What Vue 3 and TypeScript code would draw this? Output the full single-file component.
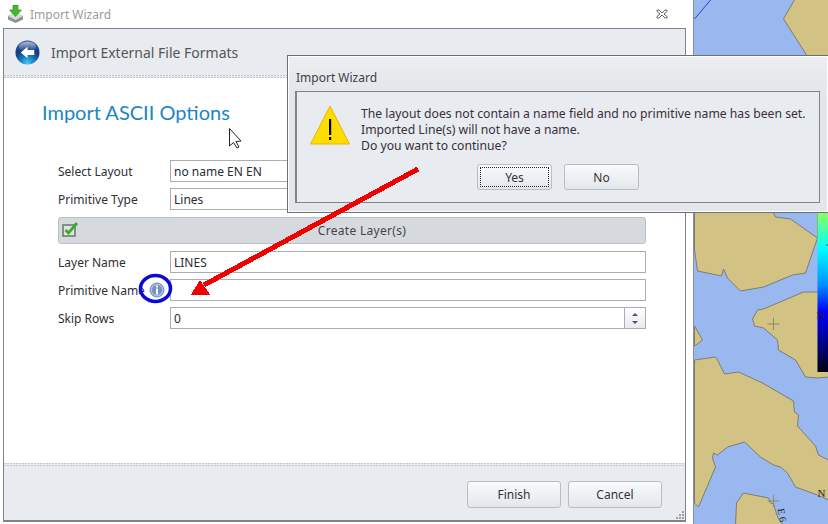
<script setup lang="ts">
const fields = [
  { label: 'Select Layout', value: 'no name EN EN' },
  { label: 'Primitive Type', value: 'Lines' },
]
const fields2 = [
  { label: 'Layer Name', value: 'LINES', info: false },
  { label: 'Primitive Name', value: '', info: true },
]
const land = [
  '795,-2 783,19 806,55 828,80 828,150 817,150 817,238 805,273 792,275 763,287 740,291 727,278 723,269 721,276 697,271 694,250 694,150 775,150 773,213 775,217 790,219 817,238 828,240 828,-2',
  '694,326 702,340 694,346',
  '828,292 803,292 763,309 757,310 752,319 754,326 763,328 777,340 778,350 795,360 805,377 817,378 828,377',
  '694,360 715,357 717,360 724,374 738,372 762,383 793,401 794,412 798,415 797,426 815,446 818,455 828,460 828,500 817,495 795,487 787,473 780,467 773,465 760,457 744,442 727,447 717,455 713,453 712,458 715,467 698,507 694,503',
  '735,526 736,503 743,493 768,498 770,503 773,504 777,517 783,526',
]
</script>

<template>
  <div class="screen">
    <section class="wizard">
      <header class="titlebar">
        <svg class="app-icon" width="15" height="18" viewBox="0 0 15 18">
          <path d="M0 11 L7.500 7 L15 11 L15 14.500 L7.500 18 L0 14.500Z" fill="#8d9296" />
          <path d="M0 11 L7.500 15 L15 11 L7.500 7Z" fill="#d8dbdd" />
          <path d="M5 0H10V5H13.500L7.500 11.500L1.500 5H5Z" fill="#43b82c" stroke="#2d8c1c" stroke-width=".6" />
        </svg>
        <span class="titlebar-text">Import Wizard</span>
        <svg class="close" width="12" height="10" viewBox="0 0 12 10">
          <path d="M1 1H3L6 4L9 1H11V2.500L8 5L11 7.500V9H9L6 6L3 9H1V7.500L4 5L1 2.500Z" fill="#fff" stroke="#555" stroke-width=".9" />
        </svg>
      </header>
      <div class="frame">
        <div class="head">
          <svg width="25" height="25" viewBox="0 0 26 26">
            <defs>
              <radialGradient id="ball" cx=".5" cy=".95" r=".85">
                <stop offset="0" stop-color="#3fd0f0" />
                <stop offset=".35" stop-color="#1a7cc4" />
                <stop offset=".7" stop-color="#123a80" />
                <stop offset="1" stop-color="#2c4f92" />
              </radialGradient>
              <linearGradient id="shine" x1="0" y1="0" x2="0" y2="1">
                <stop offset="0" stop-color="#fff" stop-opacity=".6" />
                <stop offset="1" stop-color="#fff" stop-opacity="0" />
              </linearGradient>
            </defs>
            <circle cx="13" cy="13" r="12.500" fill="url(#ball)" />
            <ellipse cx="13" cy="7" rx="9" ry="5.500" fill="url(#shine)" />
            <path d="M6 13L13 7V10.500H20V15.500H13V19Z" fill="#fff" />
          </svg>
          <span class="head-text">Import External File Formats</span>
        </div>
        <div class="rule"></div>
        <main class="content">
          <h1 class="section-title">Import ASCII Options</h1>
          <div class="form">
            <div v-for="f in fields" :key="f.label" class="row">
              <label class="label">{{ f.label }}</label>
              <div class="input">{{ f.value }}</div>
            </div>
            <div class="create">
              <svg class="check" width="17" height="16" viewBox="0 0 17 16">
                <rect x="1" y="4" width="12" height="11" fill="#dfe4e2" stroke="#69756b" stroke-width="1.500" />
                <path d="M3.500 9L6.500 12L15 2" fill="none" stroke="#3cab2b" stroke-width="2.800" />
              </svg>
              <span>Create Layer(s)</span>
            </div>
            <div v-for="f in fields2" :key="f.label" class="row">
              <label class="label">{{ f.label }}</label>
              <div class="input">{{ f.value }}</div>
              <svg v-if="f.info" class="info" width="16" height="16" viewBox="0 0 16 16">
                <circle cx="8" cy="8" r="7" fill="#a9bfe2" stroke="#7388b0" />
                <circle cx="8" cy="8" r="5" fill="#6f90c8" />
                <rect x="7" y="3.500" width="2" height="2" fill="#fff" />
                <rect x="7" y="6.500" width="2" height="6" fill="#fff" />
              </svg>
            </div>
            <div class="row">
              <label class="label">Skip Rows</label>
              <div class="input spin-input">
                <span class="spin-value">0</span>
                <span class="spinner">
                  <i class="up"></i>
                  <i class="down"></i>
                </span>
              </div>
            </div>
          </div>
        </main>
        <div class="rule"></div>
        <footer class="foot">
          <button class="btn wide">Finish</button>
          <button class="btn wide">Cancel</button>
          <svg class="grip" width="10" height="10" viewBox="0 0 10 10">
            <g fill="#9aa0a6">
              <rect x="7" y="1" width="2" height="2" />
              <rect x="4" y="4" width="2" height="2" />
              <rect x="7" y="4" width="2" height="2" />
              <rect x="1" y="7" width="2" height="2" />
              <rect x="4" y="7" width="2" height="2" />
              <rect x="7" y="7" width="2" height="2" />
            </g>
          </svg>
        </footer>
      </div>
    </section>

    <div class="map">
      <svg width="135" height="524" viewBox="693.5 0 135 524">
        <defs>
          <linearGradient id="bar" x1="0" y1="0" x2="0" y2="1">
            <stop offset="0" stop-color="#8cff60" />
            <stop offset=".22" stop-color="#00ffff" />
            <stop offset=".45" stop-color="#0090ff" />
            <stop offset=".62" stop-color="#0000ff" />
            <stop offset=".8" stop-color="#000090" />
            <stop offset="1" stop-color="#000010" />
          </linearGradient>
        </defs>
        <rect x="693" y="0" width="136" height="524" fill="#99b8f0" />
        <path d="M694 19L710 0" stroke="#2a3fe0" stroke-width="1" />
        <polygon v-for="(p, i) in land" :key="i" :points="p" fill="#d2c283" stroke="#7d7d70" stroke-width="1" />
        <path d="M767 324H779M773 318V330M767 501H779M773 495V507" stroke="#8c8a60" stroke-width="1" />
        <rect x="817" y="213" width="11" height="159" fill="url(#bar)" />
        <path d="M826 245H828M826 305H828" stroke="#333" />
        <text x="816" y="319" class="chart">N</text>
        <text x="817" y="497" class="chart">N</text>
        <text x="777" y="509" class="chart small-chart" transform="rotate(80 777 509)">E 6</text>
      </svg>
    </div>

    <div class="dialog">
      <div class="dialog-title">Import Wizard</div>
      <div class="dialog-panel">
        <svg class="warn" width="42" height="42" viewBox="0 0 42 42">
          <path d="M21 2L40.500 40H1.500Z" fill="#fddc00" stroke="#f0b400" stroke-width="1" />
          <rect x="20" y="15" width="2.200" height="16" fill="#000" />
          <rect x="20" y="33" width="2.200" height="3" fill="#000" />
        </svg>
        <div class="dialog-body">
          <p class="message">The layout does not contain a name field and no primitive name has been set.<br />Imported Line(s) will not have a name.<br />Do you want to continue?</p>
          <div class="dialog-actions">
            <button class="btn small focused"><span>Yes</span></button>
            <button class="btn small">No</button>
          </div>
        </div>
      </div>
    </div>

    <svg class="overlay" width="828" height="524" viewBox="0 0 828 524">
      <g shape-rendering="crispEdges">
        <path d="M418 169L204 285" stroke="#f00000" stroke-width="5" fill="none" />
        <path d="M191 294.500L200 280L210 294.500Z" fill="#f00000" />
      </g>
      <ellipse cx="155.500" cy="288.500" rx="15" ry="13" fill="none" stroke="#0a0ad8" stroke-width="3.500" />
      <path d="M229.500 128.500V146L233.500 142.500L237 148L239 147L236 141.500L241 141Z" fill="#fff" stroke="#222" stroke-width="1" />
    </svg>
  </div>
</template>

<style>
html, body { margin: 0; background: #fff; }
</style>

<style scoped>
.screen {
  position: relative;
  display: flex;
  width: 828px;
  height: 524px;
  overflow: hidden;
  background: #fff;
  font-family: "Noto Sans", sans-serif;
  font-size: 12px;
  color: #2b2b33;
}
.wizard {
  width: 693px;
  height: 524px;
  display: flex;
  flex-direction: column;
  background: #fff;
  border-right: 1px solid #8b8f94;
  flex: none;
}
.titlebar {
  height: 28px;
  flex: none;
  display: flex;
  align-items: center;
  padding: 0 25px 0 8px;
  box-sizing: border-box;
}
.app-icon { margin-right: 7px; }
.titlebar-text { color: #9b9b9b; }
.close { margin-left: auto; }
.frame {
  margin: 0 7px 2px 3px;
  flex: 1;
  min-height: 0;
  display: flex;
  flex-direction: column;
  border: 1px solid #80848a;
  border-bottom-width: 2px;
}
.head {
  height: 46px;
  flex: none;
  display: flex;
  align-items: center;
  gap: 11px;
  padding-left: 11px;
  background: #e8ebef;
}
.head-text { font-size: 14px; color: #565656; }
.rule {
  height: 3px;
  flex: none;
  background:
    linear-gradient(#e8ebef, #e8ebef) 0 1px / 100% 1px no-repeat,
    repeating-linear-gradient(90deg, #c4c8cc 0 2px, #eef0f2 2px 3px);
}
.content { flex: 1; background: #fff; padding: 0 38px; }
.section-title {
  margin: 21px 0 0 0;
  font-family: Lato, sans-serif;
  font-size: 20px;
  line-height: 26px;
  font-weight: 400;
  color: #1b86c0;
}
.form {
  margin: 35px 0 0 16px;
  display: flex;
  flex-direction: column;
  gap: 6px;
  width: 588px;
}
.row { display: flex; align-items: center; position: relative; }
.label { width: 112px; flex: none; color: #2f2f36; }
.input {
  flex: 1;
  height: 22px;
  box-sizing: border-box;
  border: 1px solid #abadb3;
  background: #fff;
  padding: 1px 0 0 3px;
  line-height: 20px;
}
.info { position: absolute; left: 91px; top: 3px; }
.create {
  margin: 1px 0;
  height: 27px;
  box-sizing: border-box;
  position: relative;
  display: flex;
  align-items: center;
  justify-content: center;
  padding-left: 20px;
  background: #d6dade;
  border: 1px solid #bcc0c4;
  border-radius: 3px;
  color: #44444c;
  letter-spacing: .3px;
}
.check { position: absolute; left: 3px; top: 3px; }
.spin-input { display: flex; padding: 1px 0 0 3px; }
.spin-value { flex: 1; }
.spinner {
  width: 20px;
  margin-top: -1px;
  border-left: 1px solid #abadb3;
  background: linear-gradient(#fff, #e6e9ee);
  display: flex;
  flex-direction: column;
  align-items: center;
  justify-content: center;
  gap: 5px;
}
.up, .down {
  width: 0;
  height: 0;
  border-left: 3px solid transparent;
  border-right: 3px solid transparent;
}
.up { border-bottom: 3px solid #555; }
.down { border-top: 3px solid #555; }
.foot {
  height: 54px;
  flex: none;
  position: relative;
  display: flex;
  align-items: flex-start;
  justify-content: flex-end;
  gap: 7px;
  padding: 15px 23px 0 0;
  box-sizing: border-box;
  background: #e8ebef;
}
.grip { position: absolute; right: 0; bottom: 0; }
.btn {
  font: inherit;
  color: #34343c;
  padding: 0;
  border: 1px solid #b9bdc3;
  border-radius: 3px;
  background: linear-gradient(#f8fafb, #e3e7ec);
  display: flex;
  align-items: center;
  justify-content: center;
}
.wide { width: 94px; height: 27px; }
.small { width: 75px; height: 26px; }
.focused { padding: 2px; }
.focused span {
  flex: 1;
  align-self: stretch;
  border: 1px dotted #222;
  display: flex;
  align-items: center;
  justify-content: center;
}
.map { flex: 1; background: #99b8f0; }
.map svg { display: block; }
.chart { font-family: "Liberation Serif", serif; font-size: 11px; fill: #222; }
.small-chart { font-size: 10px; }
.dialog {
  position: absolute;
  left: 287px;
  top: 55px;
  width: 541px;
  height: 158px;
  box-sizing: border-box;
  padding: 0 0 9px 7px;
  display: flex;
  flex-direction: column;
  background: linear-gradient(#eceef1 0, #e3e6ea 36px, #e3e6ea);
  border: 1px solid #6c7075;
  border-right-width: 0;
  box-shadow: inset 0 0 0 1px #fff;
}
.dialog-title {
  height: 35px;
  flex: none;
  display: flex;
  align-items: center;
  padding: 7px 0 0 1px;
  box-sizing: border-box;
  color: #3e3e48;
}
.dialog-panel {
  flex: 1;
  margin-right: 8px;
  display: flex;
  gap: 10px;
  padding: 12px 0 0 12px;
  background: #e8ebef;
  border: 1px solid #80848a;
  border-width: 1px 1px 1px 2px;
}
.warn { flex: none; }
.dialog-body { flex: 1; display: flex; flex-direction: column; }
.message { margin: 2px 0 0 0; font-size: 12.2px; line-height: 16px; color: #38303c; }
.dialog-actions { display: flex; gap: 12px; margin: 10px 0 0 116px; }
.overlay { position: absolute; left: 0; top: 0; pointer-events: none; }
</style>
